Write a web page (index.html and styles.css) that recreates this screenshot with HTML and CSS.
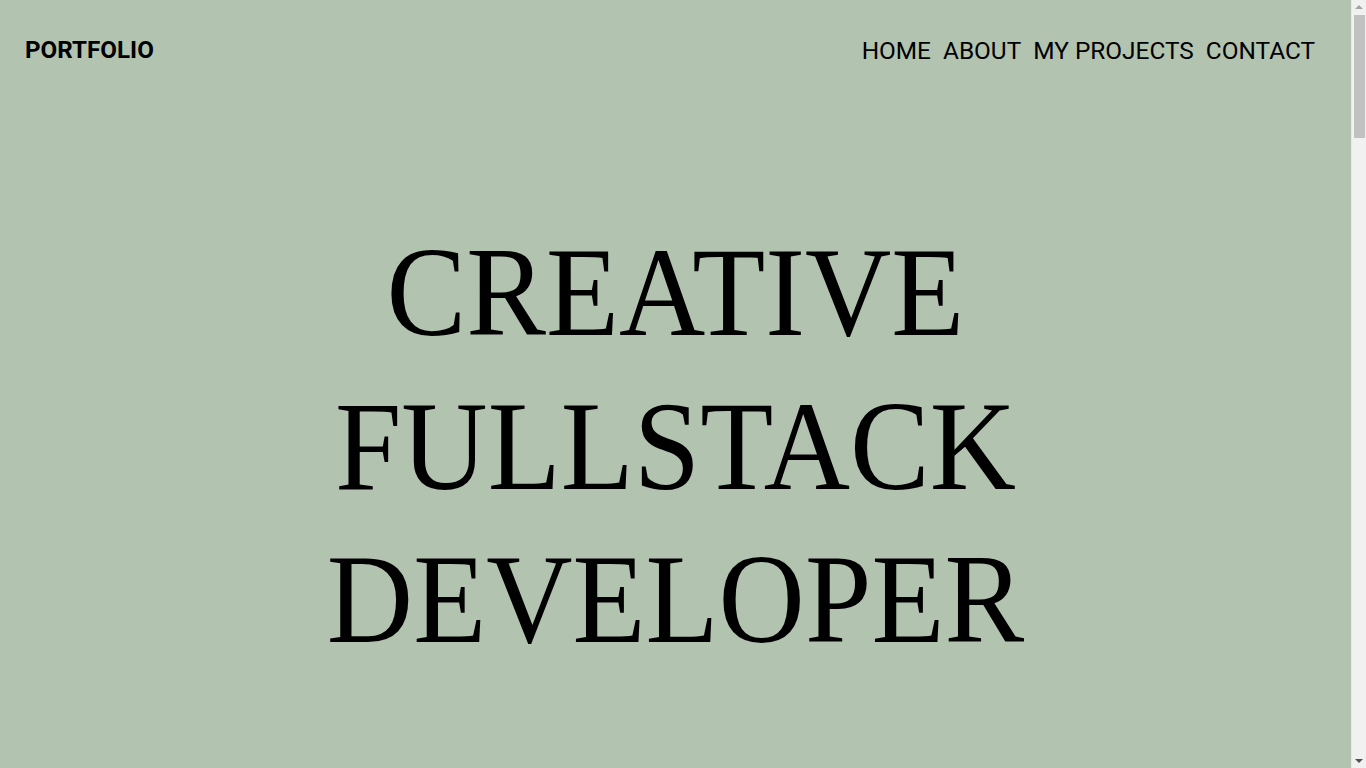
FILE: index.html
```html
<!DOCTYPE html>
<html lang="en">
<head>
<meta charset="utf-8">
<title>Portfolio</title>
<link rel="stylesheet" href="styles.css">
</head>
<body>
<div class="page">
  <header class="site-header">
    <a class="logo" href="#">PORTFOLIO</a>
    <nav class="nav">
      <a href="#">HOME</a>
      <a href="#about">ABOUT</a>
      <a href="#projects">MY PROJECTS</a>
      <a href="#contact">CONTACT</a>
    </nav>
  </header>
  <main>
    <section class="hero">
      <h1 class="hero-title">
        <span class="line">CREATIVE</span>
        <span class="line">FULLSTACK</span>
        <span class="line">DEVELOPER</span>
      </h1>
    </section>
  </main>
</div>
<div class="scrollbar" aria-hidden="true">
  <span class="sb-arrow sb-up"></span>
  <span class="sb-thumb"></span>
  <span class="sb-arrow sb-down"></span>
</div>
</body>
</html>
```
FILE: styles.css
```css
html, body {
  margin: 0;
  padding: 0;
}
html {
  scrollbar-width: none;
}
body {
  background: #b2c3b0;
  color: #000;
  font-family: Roboto, "Liberation Sans", sans-serif;
}
.page {
  margin-right: 15px;
}
.site-header {
  height: 100px;
  display: flex;
  align-items: center;
  justify-content: space-between;
  padding: 0 36px 0 25px;
}
.logo {
  font-weight: 700;
  font-size: 24.2px;
  color: #000;
  text-decoration: none;
}
.nav {
  display: flex;
  gap: 12px;
}
.nav a {
  font-size: 24.4px;
  color: #000;
  text-decoration: none;
}
.hero {
  padding-top: 116px;
  height: 4500px;
  box-sizing: border-box;
  text-align: center;
}
.hero-title {
  margin: 0;
  font-family: "Liberation Serif", "Times New Roman", serif;
  font-weight: 400;
  font-size: 128px;
  line-height: 153.6px;
}
.hero-title .line {
  display: block;
  transform: scaleX(0.934);
}
.scrollbar {
  position: fixed;
  top: 0;
  right: 0;
  width: 15px;
  height: 100vh;
  background: #f1f1f1;
  border-left: 1px solid #e8e8e8;
  box-sizing: border-box;
  display: flex;
  flex-direction: column;
  align-items: center;
}
.sb-arrow {
  width: 0;
  height: 0;
  border-left: 4px solid transparent;
  border-right: 4px solid transparent;
}
.sb-up {
  margin-top: 5px;
  border-bottom: 4px solid #a3a3a3;
}
.sb-thumb {
  margin-top: 6px;
  width: 11px;
  height: 123px;
  background: #c1c1c1;
}
.sb-down {
  margin-top: auto;
  margin-bottom: 5px;
  border-top: 4px solid #505050;
}
```
